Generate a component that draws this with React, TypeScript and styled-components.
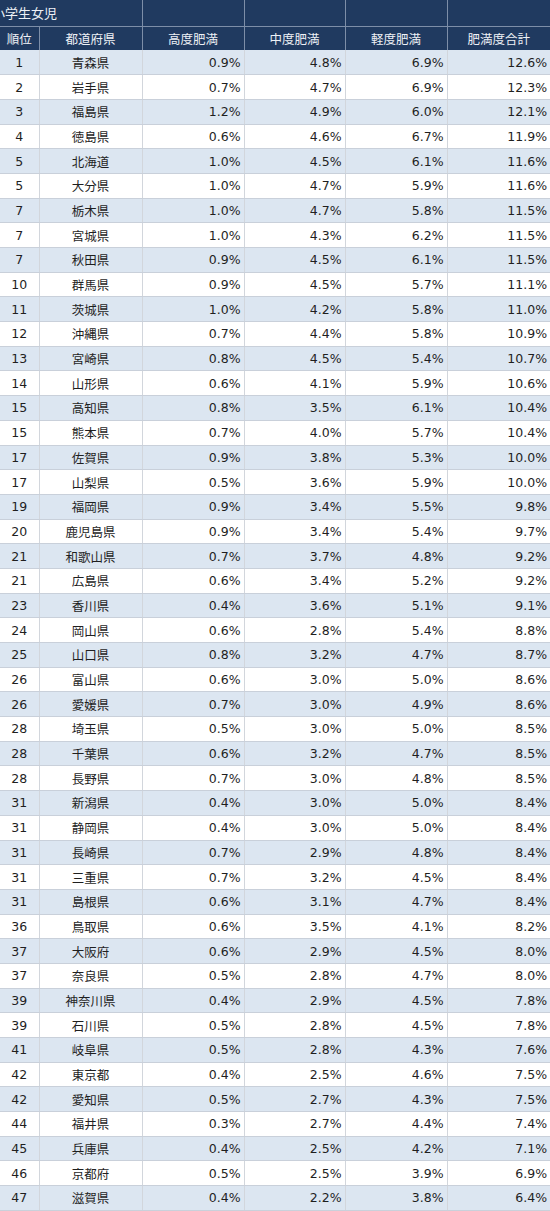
import React from "react";
import styled, { createGlobalStyle } from "styled-components";

const GlobalStyle = createGlobalStyle`
  html, body {
    margin: 0;
    padding: 0;
    background: #ffffff;
  }
  body {
    font-family: "DejaVu Sans", "Noto Sans CJK JP", sans-serif;
    color: #1f1f1f;
  }
`;

const Table = styled.table`
  width: 550px;
  border-collapse: collapse;
  table-layout: fixed;
  font-size: 12.5px;
`;

const TitleRow = styled.tr`
  height: 26px;
  background: #203a60;
`;

const HeadRow = styled.tr`
  height: 24px;
  background: #203a60;
`;

const TitleCell = styled.td`
  color: #eef1f6;
  font-size: 13px;
  text-indent: -8px;
  white-space: nowrap;
  overflow: hidden;
  padding: 0;
  border-right: 1px solid #7d8ea8;
  border-bottom: 1px solid #7d8ea8;
`;

const BlankHead = styled.td`
  padding: 0;
  border-right: 1px solid #7d8ea8;
  border-bottom: 1px solid #7d8ea8;
  &:last-child {
    border-right: none;
  }
`;

const HeadCell = styled.th`
  color: #eef1f6;
  font-weight: normal;
  font-size: 12.5px;
  text-align: center;
  padding: 0;
  border-right: 1px solid #7d8ea8;
  &:last-child {
    border-right: none;
  }
`;

const Row = styled.tr<{ $band: boolean }>`
  height: 24.7px;
  background: ${(p) => (p.$band ? "#dce6f1" : "#ffffff")};
`;

const Cell = styled.td<{ $align: "center" | "right" }>`
  text-align: ${(p) => p.$align};
  padding: 0 ${(p) => (p.$align === "right" ? "3px" : "0")} 0 0;
  border-right: 1px solid #d2d6dc;
  border-bottom: 1px solid #c9d0da;
  white-space: nowrap;
  &:last-child {
    border-right: none;
  }
`;

type Pref = [string, string, number, number, number, number];

const rows: Pref[] = [
  ["1", "青森県", 0.9, 4.8, 6.9, 12.6],
  ["2", "岩手県", 0.7, 4.7, 6.9, 12.3],
  ["3", "福島県", 1.2, 4.9, 6.0, 12.1],
  ["4", "徳島県", 0.6, 4.6, 6.7, 11.9],
  ["5", "北海道", 1.0, 4.5, 6.1, 11.6],
  ["5", "大分県", 1.0, 4.7, 5.9, 11.6],
  ["7", "栃木県", 1.0, 4.7, 5.8, 11.5],
  ["7", "宮城県", 1.0, 4.3, 6.2, 11.5],
  ["7", "秋田県", 0.9, 4.5, 6.1, 11.5],
  ["10", "群馬県", 0.9, 4.5, 5.7, 11.1],
  ["11", "茨城県", 1.0, 4.2, 5.8, 11.0],
  ["12", "沖縄県", 0.7, 4.4, 5.8, 10.9],
  ["13", "宮崎県", 0.8, 4.5, 5.4, 10.7],
  ["14", "山形県", 0.6, 4.1, 5.9, 10.6],
  ["15", "高知県", 0.8, 3.5, 6.1, 10.4],
  ["15", "熊本県", 0.7, 4.0, 5.7, 10.4],
  ["17", "佐賀県", 0.9, 3.8, 5.3, 10.0],
  ["17", "山梨県", 0.5, 3.6, 5.9, 10.0],
  ["19", "福岡県", 0.9, 3.4, 5.5, 9.8],
  ["20", "鹿児島県", 0.9, 3.4, 5.4, 9.7],
  ["21", "和歌山県", 0.7, 3.7, 4.8, 9.2],
  ["21", "広島県", 0.6, 3.4, 5.2, 9.2],
  ["23", "香川県", 0.4, 3.6, 5.1, 9.1],
  ["24", "岡山県", 0.6, 2.8, 5.4, 8.8],
  ["25", "山口県", 0.8, 3.2, 4.7, 8.7],
  ["26", "富山県", 0.6, 3.0, 5.0, 8.6],
  ["26", "愛媛県", 0.7, 3.0, 4.9, 8.6],
  ["28", "埼玉県", 0.5, 3.0, 5.0, 8.5],
  ["28", "千葉県", 0.6, 3.2, 4.7, 8.5],
  ["28", "長野県", 0.7, 3.0, 4.8, 8.5],
  ["31", "新潟県", 0.4, 3.0, 5.0, 8.4],
  ["31", "静岡県", 0.4, 3.0, 5.0, 8.4],
  ["31", "長崎県", 0.7, 2.9, 4.8, 8.4],
  ["31", "三重県", 0.7, 3.2, 4.5, 8.4],
  ["31", "島根県", 0.6, 3.1, 4.7, 8.4],
  ["36", "鳥取県", 0.6, 3.5, 4.1, 8.2],
  ["37", "大阪府", 0.6, 2.9, 4.5, 8.0],
  ["37", "奈良県", 0.5, 2.8, 4.7, 8.0],
  ["39", "神奈川県", 0.4, 2.9, 4.5, 7.8],
  ["39", "石川県", 0.5, 2.8, 4.5, 7.8],
  ["41", "岐阜県", 0.5, 2.8, 4.3, 7.6],
  ["42", "東京都", 0.4, 2.5, 4.6, 7.5],
  ["42", "愛知県", 0.5, 2.7, 4.3, 7.5],
  ["44", "福井県", 0.3, 2.7, 4.4, 7.4],
  ["45", "兵庫県", 0.4, 2.5, 4.2, 7.1],
  ["46", "京都府", 0.5, 2.5, 3.9, 6.9],
  ["47", "滋賀県", 0.4, 2.2, 3.8, 6.4],
];

const pct = (v: number) => `${v.toFixed(1)}%`;

const widths = [39, 103, 102, 101, 102, 103];

const App = () => (
  <>
    <GlobalStyle />
    <Table>
      <colgroup>
        {widths.map((w, i) => (
          <col key={i} width={w} />
        ))}
      </colgroup>
      <thead>
        <TitleRow>
          <TitleCell colSpan={2}>小学生女児</TitleCell>
          <BlankHead />
          <BlankHead />
          <BlankHead />
          <BlankHead />
        </TitleRow>
        <HeadRow>
          <HeadCell>順位</HeadCell>
          <HeadCell>都道府県</HeadCell>
          <HeadCell>高度肥満</HeadCell>
          <HeadCell>中度肥満</HeadCell>
          <HeadCell>軽度肥満</HeadCell>
          <HeadCell>肥満度合計</HeadCell>
        </HeadRow>
      </thead>
      <tbody>
        {rows.map(([rank, name, a, b, c, total], i) => (
          <Row key={name} $band={i % 2 === 0}>
            <Cell $align="center">{rank}</Cell>
            <Cell $align="center">{name}</Cell>
            <Cell $align="right">{pct(a)}</Cell>
            <Cell $align="right">{pct(b)}</Cell>
            <Cell $align="right">{pct(c)}</Cell>
            <Cell $align="right">{pct(total)}</Cell>
          </Row>
        ))}
      </tbody>
    </Table>
  </>
);

export default App;
